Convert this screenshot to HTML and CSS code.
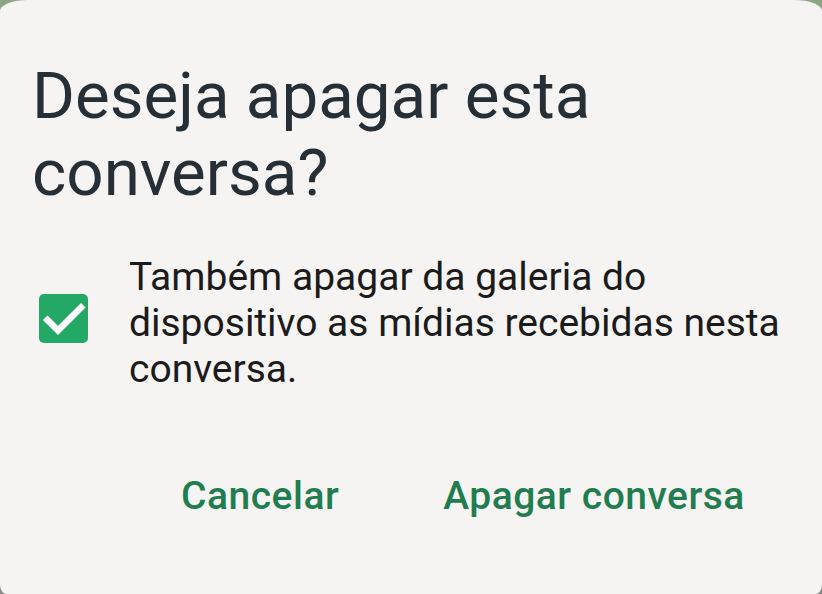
FILE: index.html
```html
<!DOCTYPE html>
<html lang="pt">
<head>
<meta charset="utf-8">
<link rel="stylesheet" href="styles.css">
</head>
<body>
<div class="dialog">
  <h1 class="title">Deseja apagar esta conversa?</h1>
  <div class="option">
    <span class="checkbox">
      <svg viewBox="0 0 49 49" width="49" height="49"><path d="M8.5 26 L19 36.5 L42 13.5" fill="none" stroke="#fff" stroke-width="6.5" stroke-linecap="square"/></svg>
    </span>
    <p class="option-text">Também apagar da galeria do dispositivo as mídias recebidas nesta conversa.</p>
  </div>
  <div class="actions">
    <span class="btn">Cancelar</span>
    <span class="btn">Apagar conversa</span>
  </div>
</div>
</body>
</html>
```

FILE: styles.css
```css
html, body {
  margin: 0;
  padding: 0;
  width: 822px;
  height: 594px;
  overflow: hidden;
}
body {
  background: linear-gradient(to bottom, #8ba684 0, #8ba684 50%, #8c8c8a 50%, #8c8c8a 100%);
  font-family: Roboto, "Noto Sans", sans-serif;
}
.dialog {
  box-sizing: border-box;
  width: 822px;
  height: 594px;
  background: #f5f4f2;
  border-top-left-radius: 28px 11px;
  border-top-right-radius: 28px 11px;
  border-bottom-left-radius: 6px 10px;
  border-bottom-right-radius: 6px 10px;
  padding: 57px 0 0 32px;
  display: flex;
  flex-direction: column;
}
.title {
  margin: 0;
  font-size: 65.5px;
  line-height: 77px;
  font-weight: 400;
  color: #262e36;
  width: 620px;
}
.option {
  display: flex;
  align-items: flex-start;
  margin-top: 43px;
}
.checkbox {
  flex: none;
  width: 49px;
  height: 49px;
  border-radius: 5px;
  background: #24a865;
  margin: 40px 41px 0 7px;
  display: flex;
}
.option-text {
  margin: 0;
  font-size: 39px;
  line-height: 46px;
  color: #1b1b1b;
  width: 680px;
}
.actions {
  display: flex;
  margin-top: 84px;
  padding-left: 149px;
  gap: 104px;
}
.btn {
  font-size: 39px;
  line-height: 40px;
  font-weight: 500;
  color: #1f7d50;
  letter-spacing: 0.5px;
}
```
